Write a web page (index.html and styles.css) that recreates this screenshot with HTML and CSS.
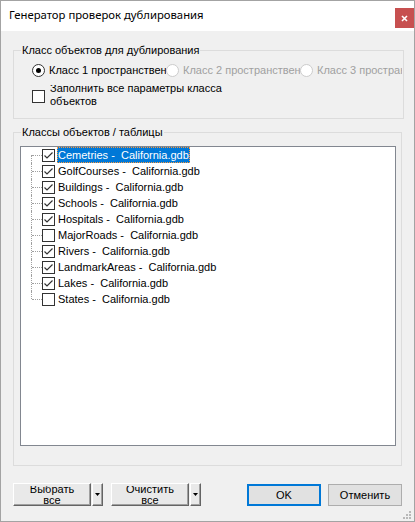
FILE: index.html
```html
<!DOCTYPE html>
<html lang="ru">
<head>
<meta charset="utf-8">
<title>Генератор проверок дублирования</title>
<link rel="stylesheet" href="styles.css">
</head>
<body>
<div class="window">
  <div class="titlebar">
    <span class="title">Генератор проверок дублирования</span>
    <span class="close"><svg width="7" height="7" viewBox="0 0 7 7"><path d="M1 1 L6 6 M6 1 L1 6" stroke="#fff" stroke-width="1.6" fill="none"/></svg></span>
  </div>
  <div class="client">
    <div class="group group-top">
      <div class="group-label">Класс объектов для дублирования</div>
      <div class="radio-row">
        <div class="radio checked"><span class="radio-circle"></span><span>Класс 1 пространственных объектов</span></div>
        <div class="radio disabled"><span class="radio-circle"></span><span>Класс 2 пространственных объектов</span></div>
        <div class="radio disabled"><span class="radio-circle"></span><span>Класс 3 пространственных объектов</span></div>
      </div>
      <div class="fill-row">
        <span class="checkbox"></span>
        <span class="fill-text">Заполнить все параметры класса<br>объектов</span>
      </div>
    </div>
    <div class="group group-tree">
      <div class="group-label">Классы объектов / таблицы</div>
      <div class="tree">
        <div class="node"><span class="branch"></span><span class="checkbox checked"><svg width="11" height="11" viewBox="0 0 11 11"><path d="M1.5 5.5 L4 8 L9.5 2.5" stroke="#333" stroke-width="1.2" fill="none"/></svg></span><span class="node-label selected">Cemetries -  California.gdb</span></div>
        <div class="node"><span class="branch"></span><span class="checkbox checked"><svg width="11" height="11" viewBox="0 0 11 11"><path d="M1.5 5.5 L4 8 L9.5 2.5" stroke="#333" stroke-width="1.2" fill="none"/></svg></span><span class="node-label">GolfCourses -  California.gdb</span></div>
        <div class="node"><span class="branch"></span><span class="checkbox checked"><svg width="11" height="11" viewBox="0 0 11 11"><path d="M1.5 5.5 L4 8 L9.5 2.5" stroke="#333" stroke-width="1.2" fill="none"/></svg></span><span class="node-label">Buildings -  California.gdb</span></div>
        <div class="node"><span class="branch"></span><span class="checkbox checked"><svg width="11" height="11" viewBox="0 0 11 11"><path d="M1.5 5.5 L4 8 L9.5 2.5" stroke="#333" stroke-width="1.2" fill="none"/></svg></span><span class="node-label">Schools -  California.gdb</span></div>
        <div class="node"><span class="branch"></span><span class="checkbox checked"><svg width="11" height="11" viewBox="0 0 11 11"><path d="M1.5 5.5 L4 8 L9.5 2.5" stroke="#333" stroke-width="1.2" fill="none"/></svg></span><span class="node-label">Hospitals -  California.gdb</span></div>
        <div class="node"><span class="branch"></span><span class="checkbox"></span><span class="node-label">MajorRoads -  California.gdb</span></div>
        <div class="node"><span class="branch"></span><span class="checkbox checked"><svg width="11" height="11" viewBox="0 0 11 11"><path d="M1.5 5.5 L4 8 L9.5 2.5" stroke="#333" stroke-width="1.2" fill="none"/></svg></span><span class="node-label">Rivers -  California.gdb</span></div>
        <div class="node"><span class="branch"></span><span class="checkbox checked"><svg width="11" height="11" viewBox="0 0 11 11"><path d="M1.5 5.5 L4 8 L9.5 2.5" stroke="#333" stroke-width="1.2" fill="none"/></svg></span><span class="node-label">LandmarkAreas -  California.gdb</span></div>
        <div class="node"><span class="branch"></span><span class="checkbox checked"><svg width="11" height="11" viewBox="0 0 11 11"><path d="M1.5 5.5 L4 8 L9.5 2.5" stroke="#333" stroke-width="1.2" fill="none"/></svg></span><span class="node-label">Lakes -  California.gdb</span></div>
        <div class="node"><span class="branch"></span><span class="checkbox"></span><span class="node-label">States -  California.gdb</span></div>
      </div>
    </div>
    <div class="buttons">
      <div class="split">
        <div class="btn3d main"><div class="clip"><span class="main-text">Выбрать<br>все</span></div></div>
        <div class="btn3d drop"><svg width="5" height="3" viewBox="0 0 5 3"><path d="M0 0 H5 L2.5 3 Z" fill="#000"/></svg></div>
      </div>
      <div class="split">
        <div class="btn3d main"><div class="clip"><span class="main-text">Очистить<br>все</span></div></div>
        <div class="btn3d drop"><svg width="5" height="3" viewBox="0 0 5 3"><path d="M0 0 H5 L2.5 3 Z" fill="#000"/></svg></div>
      </div>
      <div class="spacer"></div>
      <div class="btn default">OK</div>
      <div class="btn">Отменить</div>
    </div>
  </div>
  <svg class="grip" width="8" height="8" viewBox="0 0 8 8">
    <rect x="6" y="0" width="2" height="2" fill="#b8b8b8"/>
    <rect x="3" y="3" width="2" height="2" fill="#b8b8b8"/>
    <rect x="6" y="3" width="2" height="2" fill="#b8b8b8"/>
    <rect x="0" y="6" width="2" height="2" fill="#b8b8b8"/>
    <rect x="3" y="6" width="2" height="2" fill="#b8b8b8"/>
    <rect x="6" y="6" width="2" height="2" fill="#b8b8b8"/>
  </svg>
</div>
</body>
</html>
```
FILE: styles.css
```css
* { box-sizing: border-box; }
html, body { margin: 0; padding: 0; }
body {
  font-family: "Liberation Sans", Arial, sans-serif;
  font-size: 11px;
  color: #000;
  background: #fff;
}
.window {
  width: 415px;
  height: 522px;
  border: 1px solid #a3a3a3;
  background: #f0f0f0;
  display: flex;
  flex-direction: column;
  position: relative;
}
.titlebar {
  flex: none;
  height: 30px;
  background: #fff;
  display: flex;
  align-items: flex-start;
}
.title {
  font-family: "Noto Sans", "Liberation Sans", sans-serif;
  font-size: 11.3px;
  line-height: 16px;
  margin: 6px 0 0 8px;
}
.close {
  margin: 7px 0 0 auto;
  width: 19px;
  height: 20px;
  background: #c75050;
  display: flex;
  align-items: center;
  justify-content: center;
}
.client {
  flex: 1;
  display: flex;
  flex-direction: column;
  padding-top: 19px;
}
.group {
  border: 1px solid #dcdcdc;
  display: flex;
  flex-direction: column;
}
.group-label {
  align-self: flex-start;
  margin-top: -8px;
  padding: 0 1px;
  height: 14px;
  line-height: 14px;
  background: #f0f0f0;
  white-space: nowrap;
}
.group-top {
  margin: 0 10px 0 12px;
  padding: 0 1px 10px 18px;
}
.group-top .group-label { margin-left: -11px; }
.radio-row {
  display: flex;
  height: 16px;
  margin-top: 5px;
  overflow: hidden;
}
.radio {
  flex: none;
  width: 134px;
  display: flex;
  align-items: center;
  gap: 4px;
  white-space: nowrap;
  overflow: hidden;
}
.radio-circle {
  flex: none;
  width: 13px;
  height: 13px;
  border: 1px solid #333;
  border-radius: 50%;
  background: #fff;
  display: flex;
  align-items: center;
  justify-content: center;
}
.radio.checked .radio-circle::after {
  content: "";
  width: 5px;
  height: 5px;
  border-radius: 50%;
  background: #000;
}
.radio.disabled { color: #a0a0a0; }
.radio.disabled .radio-circle { border-color: #cccccc; }
.fill-row {
  display: flex;
  align-items: flex-start;
  gap: 5px;
  height: 23px;
  margin-top: 7px;
  overflow: hidden;
}
.fill-row .checkbox { margin-top: 5px; }
.fill-text {
  line-height: 13px;
  margin-top: -3px;
}
.checkbox {
  flex: none;
  width: 13px;
  height: 13px;
  border: 1px solid #333;
  background: #fff;
  display: flex;
}
.group-tree {
  margin: 13px 12px 0 12px;
  padding: 0 5px 19px 6px;
}
.group-tree .group-label { margin-left: 1px; }
.tree {
  margin-top: 7px;
  height: 300px;
  border: 1px solid #828790;
  background: #fff;
}
.node {
  display: flex;
  align-items: center;
  height: 16px;
}
.branch {
  flex: none;
  align-self: stretch;
  width: 21px;
  position: relative;
}
.branch::before {
  content: "";
  position: absolute;
  left: 10px;
  top: 0;
  bottom: 0;
  border-left: 1px dotted #a0a0a0;
}
.node:first-child .branch::before { top: 8px; }
.node:last-child .branch::before { bottom: 8px; }
.branch::after {
  content: "";
  position: absolute;
  left: 11px;
  right: 0;
  top: 8px;
  border-top: 1px dotted #a0a0a0;
}
.node-label {
  margin-left: 2px;
  padding: 0 1px;
  height: 16px;
  line-height: 16px;
  white-space: pre;
}
.node-label.selected {
  background: #0078d7;
  color: #fff;
  outline: 1px dotted #ff9a3c;
  outline-offset: -1px;
}
.buttons {
  flex: none;
  display: flex;
  align-items: center;
  height: 23px;
  margin: 17px 12px 0 12px;
}
.split {
  display: flex;
  gap: 1px;
}
.split + .split { margin-left: 8px; }
.btn3d {
  height: 23px;
  background: #e9e9e9;
  border: 1px solid;
  border-color: #ffffff #646464 #646464 #ffffff;
  box-shadow: inset -1px -1px 0 #a0a0a0;
}
.main {
  width: 78px;
  overflow: hidden;
}
.clip {
  margin-top: 2px;
  height: 19px;
  overflow: hidden;
  text-align: center;
}
.main-text {
  display: block;
  line-height: 11px;
  margin-top: -2px;
}
.drop {
  width: 11px;
  display: flex;
  align-items: center;
  justify-content: center;
}
.spacer { flex: 1; }
.btn {
  width: 74px;
  height: 22px;
  background: #e1e1e1;
  border: 1px solid #adadad;
  display: flex;
  align-items: center;
  justify-content: center;
}
.btn.default { border: 2px solid #0078d7; }
.btn + .btn { margin-left: 7px; }
.grip {
  position: absolute;
  right: 3px;
  bottom: 2px;
}
```
